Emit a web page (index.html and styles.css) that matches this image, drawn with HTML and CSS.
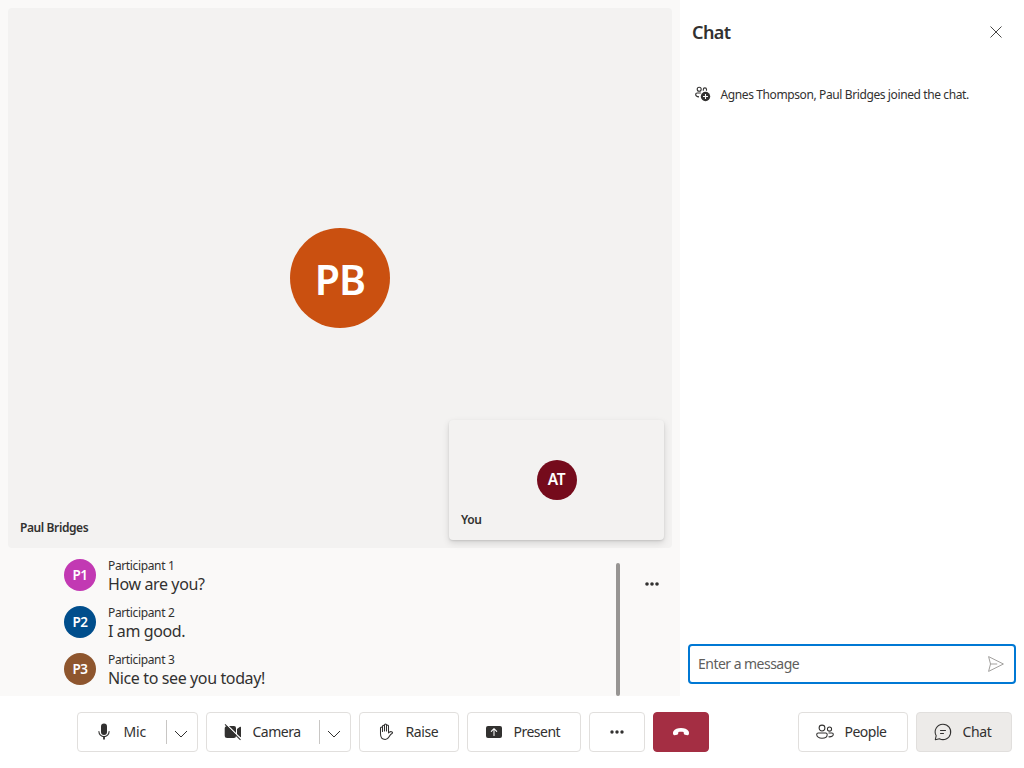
FILE: index.html
```html
<!DOCTYPE html>
<html lang="en">
<head>
<meta charset="utf-8">
<title>Call with chat</title>
<link rel="stylesheet" href="styles.css">
</head>
<body>
<div class="app">
  <div class="main">
    <section class="call">
      <div class="stage">
        <div class="avatar avatar-lg">PB</div>
        <span class="tile-name">Paul Bridges</span>
        <div class="self-tile">
          <div class="avatar avatar-md">AT</div>
          <span class="tile-name">You</span>
        </div>
      </div>
      <div class="captions">
        <ul class="caption-list">
          <li class="caption"><div class="avatar avatar-sm pink">P1</div><div><div class="speaker">Participant 1</div><div class="line">How are you?</div></div></li>
          <li class="caption"><div class="avatar avatar-sm blue">P2</div><div><div class="speaker">Participant 2</div><div class="line">I am good.</div></div></li>
          <li class="caption"><div class="avatar avatar-sm brown">P3</div><div><div class="speaker">Participant 3</div><div class="line">Nice to see you today!</div></div></li>
        </ul>
        <div class="scrollbar"></div>
        <button class="caption-more" aria-label="More options"><svg width="16" height="16" viewBox="0 0 16 16" fill="currentColor"><circle cx="3" cy="8" r="1.8"/><circle cx="8" cy="8" r="1.8"/><circle cx="13" cy="8" r="1.8"/></svg></button>
      </div>
    </section>
    <aside class="chat">
      <header class="chat-header"><h2>Chat</h2>
        <svg width="12" height="12" viewBox="0 0 12 12" fill="none" stroke="currentColor" stroke-width=".9"><path d="M.5.5l11 11M11.500.5l-11 11"/></svg>
      </header>
      <div class="system-message">
        <svg width="16" height="16" viewBox="0 0 16 16" fill="none" stroke="currentColor" stroke-width="1.1"><circle cx="4.200" cy="3.200" r="2"/><path d="M8.300 4.800V3.500a1.600 1.600 0 0 1 3.200 0v1.300M5.800 7H2.200C1.200 7 .7 7.600.7 8.500c0 1.400 1.200 2.300 3.300 2.400"/><circle cx="10.500" cy="10.500" r="4.700" fill="currentColor" stroke="none"/><path d="M10.500 8v5M8 10.500h5" stroke="#fff"/></svg>
        <span>Agnes Thompson, Paul Bridges joined the chat.</span>
      </div>
      <div class="send-box"><span>Enter a message</span>
        <svg width="16" height="16" viewBox="0 0 16 16" fill="none" stroke="currentColor" stroke-linejoin="round"><path d="M.6.600L15.400 8 .6 15.400 2.500 8zM2.500 8h6.700"/></svg>
      </div>
    </aside>
  </div>
  <footer class="controls">
    <div class="group">
      <div class="btn split mic"><span class="btn-main">
        <svg width="20" height="20" viewBox="0 0 20 20"><rect x="7" y="1.500" width="6" height="11.500" rx="3" fill="currentColor"/><path d="M4.900 9.500a5.100 5.100 0 0 0 10.200 0" fill="none" stroke="currentColor" stroke-width="1.100" stroke-linecap="round"/><path d="M10 14.600V17.500" stroke="currentColor" stroke-width="1.800"/></svg><span class="label">Mic</span></span>
        <span class="chevron"><svg width="14" height="8" viewBox="0 0 14 8" fill="none" stroke="currentColor"><path d="M1 1l6 6 6-6"/></svg></span></div>
      <div class="btn split camera"><span class="btn-main">
        <svg width="20" height="20" viewBox="0 0 20 20"><path d="M4.200 4H11a2 2 0 0 1 2 2v8a2 2 0 0 1-2 2H4.200a2.500 2.500 0 0 1-2.500-2.500v-7A2.500 2.500 0 0 1 4.200 4zM14 7l3-2.200q1-.5 1 .6v9.200q0 1-1 .5L14 13z" fill="currentColor"/><path d="M2.800 1.700l15.600 15.600" stroke="#fff" stroke-width="1.300"/><path d="M2 2.300l15.500 15.500" stroke="currentColor" stroke-width="1.100"/></svg><span class="label">Camera</span></span>
        <span class="chevron"><svg width="14" height="8" viewBox="0 0 14 8" fill="none" stroke="currentColor"><path d="M1 1l6 6 6-6"/></svg></span></div>
      <div class="btn raise">
        <svg width="20" height="20" viewBox="0 0 20 20" fill="none" stroke="currentColor" stroke-width="1.050" stroke-linecap="round" stroke-linejoin="round"><path d="M6.500 9.500V4.200a1 1 0 0 1 2 0V9M8.500 4V3a1 1 0 0 1 2 0v6M10.500 4a1 1 0 0 1 2 0v5M6.500 6a1 1 0 0 0-2 0v5.800c0 3.500 1.600 5.700 4.700 5.700 2.200 0 3-1 3.900-2.700.8-1.500 1.500-2.600 3.200-3.600.4-.3.300-.7 0-1-1.300-1-2.700-.6-3.800.7V5.500"/></svg><span class="label">Raise</span></div>
      <div class="btn present">
        <svg width="20" height="20" viewBox="0 0 20 20"><rect x="2" y="4" width="16" height="12" rx="2" fill="currentColor"/><path d="M10 13.500V7M7.300 9.400L10 6.700l2.700 2.700" fill="none" stroke="#fff" stroke-width="1.050" stroke-linecap="round" stroke-linejoin="round"/></svg><span class="label">Present</span></div>
      <div class="btn more"><svg width="16" height="16" viewBox="0 0 16 16" fill="currentColor"><circle cx="3" cy="8" r="1.700"/><circle cx="8" cy="8" r="1.700"/><circle cx="13" cy="8" r="1.700"/></svg></div>
      <div class="btn hangup"><svg width="16" height="8" viewBox="0 0 16 8" fill="currentColor"><path d="M8 0c3.500 0 6.200 1.200 7.400 3 .7 1.100.8 2.500.3 3.600-.2.500-.7.800-1.200.7l-2.600-.5c-.7-.1-1-.6-1.100-1.200l-.2-1.500C8.900 3.600 7.100 3.600 5.400 4.100l-.2 1.500c-.1.600-.4 1.100-1.100 1.200l-2.600.5c-.5.100-1-.2-1.200-.7C-.2 5.500-.1 4.100.6 3 1.800 1.200 4.500 0 8 0z"/></svg></div>
    </div>
    <div class="group">
      <div class="btn people">
        <svg width="20" height="20" viewBox="0 0 20 20" fill="none" stroke="currentColor" stroke-width="1.050"><circle cx="7" cy="6" r="2.900"/><circle cx="14.500" cy="7" r="2.100"/><path d="M3.300 11h7.400c.9 0 1.500.6 1.500 1.400 0 2-2 3.800-5.200 3.800s-5.300-1.700-5.300-3.800c0-.8.700-1.400 1.600-1.400zM13.500 11h3.400c.8 0 1.400.6 1.400 1.300 0 1.700-1.700 2.800-4.800 2.500"/></svg><span class="label">People</span></div>
      <div class="btn chat-toggle">
        <svg width="20" height="20" viewBox="0 0 20 20" fill="none" stroke="currentColor" stroke-width="1.050" stroke-linecap="round" stroke-linejoin="round"><path d="M10 2.200a7.700 7.700 0 1 1-3.600 14.500L2.300 17.700l.9-4A7.700 7.700 0 0 1 10 2.200zM7.500 8.500h5M7.500 11.500h3"/></svg><span class="label">Chat</span></div>
    </div>
  </footer>
</div>
</body>
</html>
```
FILE: styles.css
```css
* { box-sizing: border-box; }
body { margin: 0; color: #323130; background: #fff; font-family: "Noto Sans", "Open Sans", sans-serif; }
svg { display: block; flex: none; overflow: visible; }
.app { width: 1024px; height: 768px; display: flex; flex-direction: column; overflow: hidden; }
.main { height: 696px; display: flex; }
.call { width: 680px; padding: 8px 8px 0; background: #faf9f8; display: flex; flex-direction: column; }
.stage { position: relative; height: 540px; flex: none; border-radius: 4px; background: #f3f2f1; display: flex; align-items: center; justify-content: center; }
.avatar { border-radius: 50%; color: #fff; font-weight: 560; display: flex; align-items: center; justify-content: center; flex: none; }
.avatar-lg { width: 100px; height: 100px; background: #ca5010; font-size: 41px; padding-top: 2px; letter-spacing: -0.8px; }
.avatar-md { width: 40px; height: 40px; background: #750b1c; font-size: 15.5px; padding-bottom: 2px; letter-spacing: -0.4px; }
.avatar-sm { width: 32px; height: 32px; font-size: 13.5px; margin-top: 1px; letter-spacing: -0.4px; }
.pink { background: #c239b3; }
.blue { background: #004e8c; }
.brown { background: #8e562e; }
.tile-name { position: absolute; left: 12px; bottom: 12px; font-size: 12px; line-height: 16px; font-weight: 560; letter-spacing: -0.4px; }
.self-tile { position: absolute; right: 8px; bottom: 8px; width: 215px; height: 120px; border-radius: 4px; background: #f3f2f1; display: flex; align-items: center; justify-content: center; box-shadow: 0 3px 7px rgba(0,0,0,.13), 0 1px 2px rgba(0,0,0,.11); }
.captions { height: 148px; display: flex; padding-top: 10px; }
.caption-list { width: 608px; margin: 0; padding: 0 0 0 56px; list-style: none; }
.caption { display: flex; gap: 12px; height: 47px; }
.speaker { font-size: 12px; line-height: 16px; letter-spacing: -0.36px; }
.line { font-size: 16px; line-height: 20px; letter-spacing: -0.38px; }
.scrollbar { width: 4px; height: 133px; margin-top: 5px; border-radius: 2px; background: #979593; }
.caption-more { border: 0; padding: 0; margin: 18px 0 0 24px; width: 16px; height: 16px; background: none; color: #323130; }
.chat { width: 344px; padding: 0 8px 12px; display: flex; flex-direction: column; }
.chat-header { height: 64px; display: flex; align-items: center; justify-content: space-between; padding: 0 14px 0 4px; }
.chat-header h2 { margin: 0; font-size: 18px; line-height: 24px; font-weight: 560; letter-spacing: -0.6px; }
.system-message { display: flex; align-items: center; gap: 9.5px; height: 16px; margin-top: 22px; padding-left: 7px; font-size: 12px; line-height: 16px; letter-spacing: -0.39px; white-space: nowrap; }
.system-message span { padding-top: 2px; }
.send-box { margin-top: auto; height: 40px; border: 2px solid #0078d4; border-radius: 4px; display: flex; align-items: center; justify-content: space-between; padding: 0 10px 0 8px; font-size: 14px; color: #605e5c; letter-spacing: -0.53px; }
.send-box span { padding-bottom: 2px; }
.send-box svg { color: #a19f9d; }
.controls { height: 72px; display: flex; justify-content: space-between; align-items: center; padding: 0 12px 0 77px; }
.group { display: flex; gap: 8px; }
.btn { height: 40px; border: 1px solid #e1dfdd; border-radius: 4px; background: #fff; display: flex; align-items: center; font-size: 14px; letter-spacing: -0.5px; padding-left: 16px; }
.btn .label { margin-left: 9.5px; padding-bottom: 2px; white-space: nowrap; }
.btn-main { display: flex; align-items: center; flex: 1; }
.chevron { width: 31px; height: 24px; border-left: 1px solid #c8c6c4; display: flex; align-items: center; justify-content: center; padding: 4px 3px 0 0; }
.mic { width: 121px; }
.camera { width: 145px; }
.raise { width: 100px; }
.present { width: 114px; }
.more, .hangup { width: 56px; padding: 0; justify-content: center; }
.hangup { background: #a42e43; border-color: #a42e43; color: #fff; }
.people { width: 110px; }
.chat-toggle { width: 96px; background: #edebe9; }
.mic .label { letter-spacing: -0.2px; }
.raise .label, .chat-toggle .label { letter-spacing: -0.4px; }
```
